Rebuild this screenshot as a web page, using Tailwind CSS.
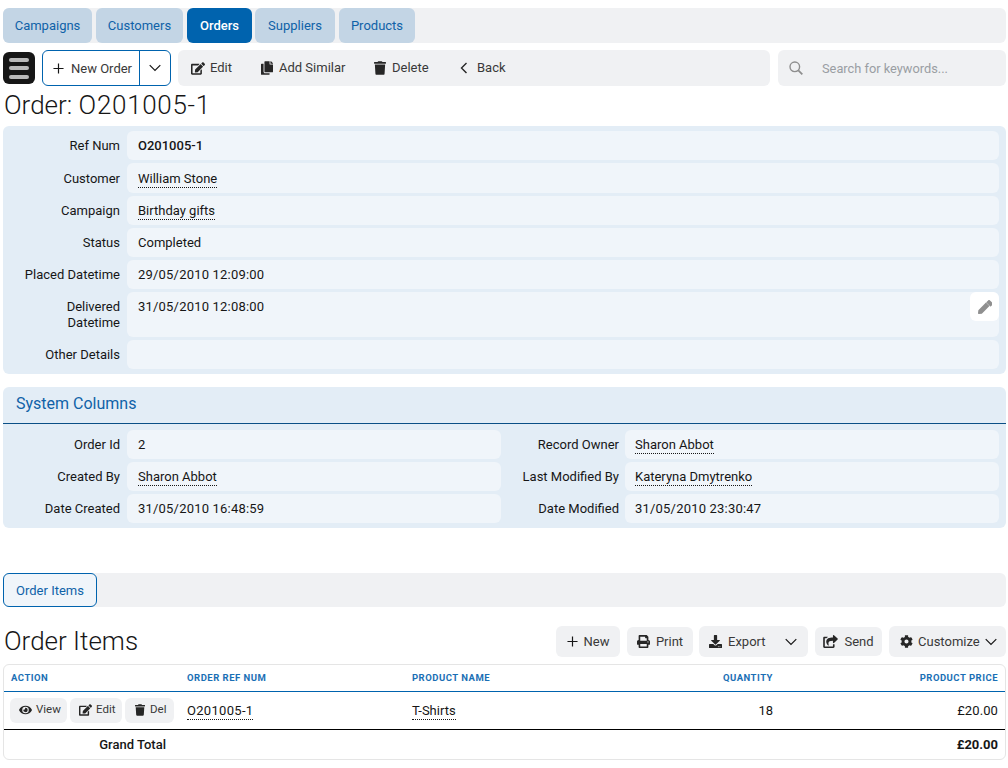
<!doctype html>
<html>
  <head>
    <meta charset="UTF-8" />
    <meta name="viewport" content="width=device-width, initial-scale=1.0" />
    <script src="https://cdn.jsdelivr.net/npm/@tailwindcss/browser@4"></script>
  </head>
  <body class="bg-white font-['Roboto',sans-serif] text-[13px] text-[#161616] h-[768px] overflow-hidden">
    <div class="pl-[3px] pr-[2px] pt-2">
      <!-- main nav -->
      <nav class="flex gap-[3px] h-[35px] bg-[#f0f1f3] rounded-md">
        <a class="w-[89px] flex items-center justify-center rounded-md bg-[#c3d5e5] text-[#0f62a8]">Campaigns</a>
        <a class="w-[87px] ml-px flex items-center justify-center rounded-md bg-[#c3d5e5] text-[#0f62a8]">Customers</a>
        <a class="w-[65px] ml-px flex items-center justify-center rounded-md bg-[#0063ae] text-white font-medium">Orders</a>
        <a class="w-[80px] flex items-center justify-center rounded-md bg-[#c3d5e5] text-[#0f62a8]">Suppliers</a>
        <a class="w-[76px] ml-px flex items-center justify-center rounded-md bg-[#c3d5e5] text-[#0f62a8]">Products</a>
      </nav>

      <!-- toolbar -->
      <div class="flex items-center mt-[7px] h-9">
        <button class="w-8 h-8 bg-[#161616] rounded-md flex flex-col items-center justify-center gap-[4.5px]">
          <span class="w-5 h-[4px] rounded bg-[#b9b9b9]"></span>
          <span class="w-5 h-[4px] rounded bg-[#b9b9b9]"></span>
          <span class="w-5 h-[4px] rounded bg-[#b9b9b9]"></span>
        </button>
        <div class="ml-[7px] w-[129px] h-9 flex border border-[#0063ae] rounded-md bg-white">
          <div class="w-[96px] flex items-center pl-[10px] gap-[7px] text-[#393939]">
            <svg class="w-[11px] h-[11px]" viewBox="0 0 12 12"><path d="M6 .5v11M.5 6h11" stroke="#161616" stroke-width="1.3" fill="none" /></svg>
            <span class="pt-px">New Order</span>
          </div>
          <div class="flex-1 border-l border-[#0063ae] flex items-center justify-center">
            <svg class="w-3 h-2" viewBox="0 0 12 8"><path d="M.7 1.2l5.3 5.3 5.3-5.3" stroke="#161616" stroke-width="1.2" fill="none" /></svg>
          </div>
        </div>
        <div class="ml-[7px] w-[592px] h-9 bg-[#f0f1f3] rounded-md flex items-center text-[#393939]">
          <span class="ml-[13px] flex items-center gap-[5px] w-[70px]">
            <svg class="w-[14px] h-[13px] fill-[#262626]" viewBox="0 0 576 512"><path d="M402.6 83.2l90.2 90.2c3.8 3.8 3.8 10 0 13.8L274.4 405.6l-92.8 10.3c-12.4 1.4-22.9-9.1-21.5-21.5l10.3-92.8L388.8 83.2c3.8-3.8 10-3.8 13.8 0zm162-22.9l-48.8-48.8c-15.2-15.2-39.9-15.2-55.2 0l-35.4 35.4c-3.8 3.8-3.8 10 0 13.8l90.2 90.2c3.8 3.8 10 3.8 13.8 0l35.4-35.4c15.2-15.3 15.2-40 0-55.2zM384 346.2V448H64V128h229.8c3.2 0 6.2-1.3 8.5-3.5l40-40c7.6-7.6 2.2-20.5-8.5-20.5H48C21.5 64 0 85.5 0 112v352c0 26.5 21.5 48 48 48h352c26.5 0 48-21.5 48-48V306.2c0-10.7-12.9-16-20.5-8.5l-40 40c-2.2 2.3-3.5 5.3-3.5 8.5z" /></svg>
            Edit
          </span>
          <span class="flex items-center gap-[6px] w-[113px]">
            <svg class="w-3 h-[14px] fill-[#262626]" viewBox="0 0 448 512"><path d="M320 448v40c0 13.255-10.745 24-24 24H24c-13.255 0-24-10.745-24-24V120c0-13.255 10.745-24 24-24h72v296c0 30.879 25.121 56 56 56h168zm0-344V0H152c-13.255 0-24 10.745-24 24v368c0 13.255 10.745 24 24 24h272c13.255 0 24-10.745 24-24V128H344c-13.2 0-24-10.8-24-24zm120.971-31.029L375.029 7.029A24 24 0 0 0 358.059 0H352v96h96v-6.059a24 24 0 0 0-7.029-16.97z" /></svg>
            Add Similar
          </span>
          <span class="flex items-center gap-[6px] w-[86px]">
            <svg class="w-3 h-[14px] fill-[#262626]" viewBox="0 0 448 512"><path d="M432 32H312l-9.4-18.7A24 24 0 0 0 281.1 0H166.8a23.72 23.72 0 0 0-21.4 13.3L136 32H16A16 16 0 0 0 0 48v32a16 16 0 0 0 16 16h416a16 16 0 0 0 16-16V48a16 16 0 0 0-16-16zM53.2 467a48 48 0 0 0 47.9 45h245.8a48 48 0 0 0 47.9-45L416 128H32z" /></svg>
            Delete
          </span>
          <span class="flex items-center gap-[9px]">
            <svg class="w-[8px] h-3" viewBox="0 0 8 12"><path d="M6.5 1L1.5 6l5 5" stroke="#262626" stroke-width="1.4" fill="none" /></svg>
            Back
          </span>
        </div>
        <div class="ml-2 w-[228px] h-9 bg-[#f0f1f3] rounded-md flex items-center text-[#9a9ea3] text-[12.8px]">
          <svg class="ml-[11px] w-[14px] h-[14px]" viewBox="0 0 14 14"><circle cx="5.8" cy="5.8" r="4.8" stroke="#8e8e8e" stroke-width="1.4" fill="none" /><path d="M9.3 9.3l4 4" stroke="#8e8e8e" stroke-width="1.8" /></svg>
          <span class="ml-[19px] pt-px">Search for keywords...</span>
        </div>
      </div>

      <h1 class="text-[26px] leading-[39px] h-[40px] pl-px font-light">Order: <span class="tracking-[0.7px]">O201005-1</span></h1>

      <!-- order fields -->
      <section class="bg-[#e3edf6] rounded-md pt-[5px] pb-[5px] flex flex-col gap-[3px]">
        <div class="flex h-[29px]"><div class="w-[117px] text-right leading-[29px]">Ref Num</div><div class="ml-[7px] w-[872px] bg-[#f0f5fa] rounded-md pl-[11px] leading-[29px] font-medium">O201005-1</div></div>
        <div class="flex h-[30px]"><div class="w-[117px] text-right leading-[31px]">Customer</div><div class="ml-[7px] w-[872px] bg-[#f0f5fa] rounded-md pl-[11px] leading-[31px]"><span class="border-b border-dotted border-[#161616] pb-px">William Stone</span></div></div>
        <div class="flex h-[29px]"><div class="w-[117px] text-right leading-[29px]">Campaign</div><div class="ml-[7px] w-[872px] bg-[#f0f5fa] rounded-md pl-[11px] leading-[29px]"><span class="border-b border-dotted border-[#161616] pb-px">Birthday gifts</span></div></div>
        <div class="flex h-[29px]"><div class="w-[117px] text-right leading-[29px]">Status</div><div class="ml-[7px] w-[872px] bg-[#f0f5fa] rounded-md pl-[11px] leading-[29px]">Completed</div></div>
        <div class="flex h-[29px]"><div class="w-[117px] text-right leading-[29px]">Placed Datetime</div><div class="ml-[7px] w-[872px] bg-[#f0f5fa] rounded-md pl-[11px] leading-[29px] tracking-[0.2px]">29/05/2010 12:09:00</div></div>
        <div class="flex h-[45px]">
          <div class="w-[117px] text-right leading-4 pt-[7px]">Delivered<br />Datetime</div>
          <div class="ml-[7px] w-[872px] bg-[#f0f5fa] rounded-md pl-[11px] leading-[29px] tracking-[0.2px] relative">
            31/05/2010 12:08:00
            <span class="absolute right-0 top-0 w-[29px] h-[29px] bg-white rounded-md flex items-center justify-center">
              <svg class="w-[14px] h-[14px] fill-[#8f8f8f]" viewBox="0 0 512 512"><path d="M290.74 93.24l128.02 128.02-277.99 277.99-114.14 12.6C11.35 513.54-1.56 500.62.14 485.34l12.7-114.22 277.9-277.88zm207.2-19.06l-60.11-60.11c-18.75-18.75-49.16-18.75-67.91 0l-56.55 56.55c-9.37 9.37-9.37 24.57 0 33.94l128.02 128.02c9.37 9.37 24.57 9.37 33.94 0l56.55-56.55c18.75-18.75 18.75-49.16.06-67.85z" /></svg>
            </span>
          </div>
        </div>
        <div class="flex h-[29px]"><div class="w-[117px] text-right leading-[29px]">Other Details</div><div class="ml-[7px] w-[872px] bg-[#f0f5fa] rounded-md"></div></div>
      </section>

      <!-- system columns -->
      <section class="mt-[13px] bg-[#e3edf6] rounded-md pb-[5px]">
        <h2 class="h-[37px] pl-[13px] leading-[34px] text-[16px] text-[#0f62a8] border-b border-[#0a4f86]">System Columns</h2>
        <div class="grid grid-cols-[498px_498px] gap-y-[3px] pt-[6px]">
          <div class="flex h-[29px]"><div class="w-[117px] text-right leading-[29px]">Order Id</div><div class="ml-[7px] w-[374px] bg-[#f0f5fa] rounded-md pl-[11px] leading-[29px]">2</div></div>
          <div class="flex h-[29px]"><div class="w-[118px] text-right leading-[29px]">Record Owner</div><div class="ml-[6px] w-[374px] bg-[#f0f5fa] rounded-md pl-[10px] leading-[29px]"><span class="border-b border-dotted border-[#161616] pb-px">Sharon Abbot</span></div></div>
          <div class="flex h-[29px]"><div class="w-[117px] text-right leading-[29px]">Created By</div><div class="ml-[7px] w-[374px] bg-[#f0f5fa] rounded-md pl-[11px] leading-[29px]"><span class="border-b border-dotted border-[#161616] pb-px">Sharon Abbot</span></div></div>
          <div class="flex h-[29px]"><div class="w-[118px] text-right leading-[29px]">Last Modified By</div><div class="ml-[6px] w-[374px] bg-[#f0f5fa] rounded-md pl-[10px] leading-[29px]"><span class="border-b border-dotted border-[#161616] pb-px">Kateryna Dmytrenko</span></div></div>
          <div class="flex h-[29px]"><div class="w-[117px] text-right leading-[29px]">Date Created</div><div class="ml-[7px] w-[374px] bg-[#f0f5fa] rounded-md pl-[11px] leading-[29px] tracking-[0.2px]">31/05/2010 16:48:59</div></div>
          <div class="flex h-[29px]"><div class="w-[118px] text-right leading-[29px]">Date Modified</div><div class="ml-[6px] w-[374px] bg-[#f0f5fa] rounded-md pl-[10px] leading-[29px] tracking-[0.2px]">31/05/2010 23:30:47</div></div>
        </div>
      </section>

      <!-- child tabs -->
      <div class="mt-[45px] h-[34px] bg-[#f0f1f3] rounded-md">
        <a class="w-[94px] h-[34px] flex items-center justify-center pt-px bg-[#f0f5fa] border border-[#0063ae] rounded-md text-[#0f62a8]">Order Items</a>
      </div>

      <!-- order items -->
      <div class="mt-[19px] flex items-center h-[31px]">
        <h2 class="text-[26px] leading-[31px] pl-px flex-1 font-light">Order Items</h2>
        <div class="flex items-center text-[#393939]">
          <span class="w-16 h-[31px] bg-[#f0f1f3] rounded-md flex items-center justify-center gap-[6px]">
            <svg class="w-[11px] h-[11px]" viewBox="0 0 12 12"><path d="M6 .5v11M.5 6h11" stroke="#161616" stroke-width="1.3" fill="none" /></svg>New
          </span>
          <span class="ml-[7px] w-[66px] h-[29px] bg-[#f0f1f3] rounded-md flex items-center justify-center gap-[6px]">
            <svg class="w-[13px] h-[13px] fill-[#262626]" viewBox="0 0 512 512"><path d="M448 192V77.25c0-8.49-3.37-16.62-9.37-22.63L393.37 9.37c-6-6-14.14-9.37-22.63-9.37H96C78.33 0 64 14.33 64 32v160c-35.35 0-64 28.65-64 64v112c0 8.84 7.16 16 16 16h48v96c0 17.67 14.33 32 32 32h320c17.67 0 32-14.33 32-32v-96h48c8.84 0 16-7.16 16-16V256c0-35.35-28.65-64-64-64zm-64 256H128v-96h256v96zm0-224H128V64h192v48c0 8.84 7.16 16 16 16h48v96zm48 72c-13.25 0-24-10.75-24-24 0-13.26 10.75-24 24-24s24 10.74 24 24c0 13.25-10.75 24-24 24z" /></svg>Print
          </span>
          <span class="ml-[6px] w-[109px] h-[31px] bg-[#f0f1f3] rounded-md flex items-center pl-[10px]">
            <svg class="w-[13px] h-[13px] fill-[#262626] mr-[6px]" viewBox="0 0 512 512"><path d="M216 0h80c13.3 0 24 10.7 24 24v168h87.7c17.8 0 26.7 21.5 14.1 34.1L269.7 378.3c-7.5 7.5-19.8 7.5-27.3 0L90.1 226.1c-12.6-12.6-3.7-34.1 14.1-34.1H192V24c0-13.3 10.7-24 24-24zm296 376v112c0 13.3-10.7 24-24 24H24c-13.3 0-24-10.7-24-24V376c0-13.3 10.7-24 24-24h146.7l49 49c20.1 20.1 52.5 20.1 72.6 0l49-49H488c13.3 0 24 10.7 24 24zm-124 88c0-11-9-20-20-20s-20 9-20 20 9 20 20 20 20-9 20-20zm64 0c0-11-9-20-20-20s-20 9-20 20 9 20 20 20 20-9 20-20z" /></svg>
            <span class="w-[57px]">Export</span>
            <svg class="w-3 h-2" viewBox="0 0 12 8"><path d="M.7 1.2l5.3 5.3 5.3-5.3" stroke="#161616" stroke-width="1.2" fill="none" /></svg>
          </span>
          <span class="ml-[7px] w-[67px] h-[29px] bg-[#f0f1f3] rounded-md flex items-center justify-center gap-[6px]">
            <svg class="w-[15px] h-[13px] fill-[#262626]" viewBox="0 0 576 512"><path d="M568.482 177.448L424.479 313.433C409.3 327.768 384 317.14 384 295.985v-71.963c-144.575.97-205.566 35.113-164.775 171.353 4.483 14.973-12.846 26.567-25.006 17.33C155.252 383.105 120 326.488 120 269.339c0-143.937 117.599-172.5 264-173.312V24.012c0-21.174 25.317-31.768 40.479-17.448l144.003 135.988c10.02 9.463 10.028 25.425 0 34.896zM384 379.128V448H64V128h50.916a11.99 11.99 0 0 0 8.648-3.693c14.953-15.568 32.237-27.89 51.014-37.676C185.708 80.83 181.584 64 169.033 64H48C21.49 64 0 85.49 0 112v352c0 26.51 21.49 48 48 48h352c26.51 0 48-21.49 48-48v-88.806c0-8.288-8.197-14.066-16.011-11.302a71.83 71.83 0 0 1-34.189 3.377c-7.27-1.046-13.8 4.514-13.8 11.859z" /></svg>Send
          </span>
          <span class="ml-[7px] w-[117px] h-[31px] bg-[#f0f1f3] rounded-md flex items-center pl-[11px]">
            <svg class="w-[13px] h-[13px] fill-[#262626] mr-[5px]" viewBox="0 0 512 512"><path d="M487.4 315.7l-42.6-24.6c4.3-23.2 4.3-47 0-70.2l42.6-24.6c4.9-2.8 7.1-8.6 5.5-14-11.1-35.6-30-67.8-54.7-94.6-3.8-4.1-10-5.1-14.8-2.3L380.8 110c-17.9-15.4-38.5-27.3-60.8-35.1V25.8c0-5.6-3.9-10.5-9.4-11.7-36.7-8.2-74.3-7.8-109.2 0-5.5 1.2-9.4 6.1-9.4 11.7V75c-22.2 7.9-42.8 19.8-60.8 35.1L88.7 85.5c-4.9-2.8-11-1.9-14.8 2.3-24.7 26.7-43.6 58.9-54.7 94.6-1.7 5.4.6 11.2 5.5 14L67.3 221c-4.3 23.2-4.3 47 0 70.2l-42.6 24.6c-4.9 2.8-7.1 8.6-5.5 14 11.1 35.6 30 67.8 54.7 94.6 3.8 4.1 10 5.1 14.8 2.3l42.6-24.6c17.9 15.4 38.5 27.3 60.8 35.1v49.2c0 5.6 3.9 10.5 9.4 11.7 36.7 8.2 74.3 7.8 109.2 0 5.5-1.2 9.4-6.1 9.4-11.7v-49.2c22.2-7.9 42.8-19.8 60.8-35.1l42.6 24.6c4.9 2.8 11 1.9 14.8-2.3 24.7-26.7 43.6-58.9 54.7-94.6 1.5-5.5-.7-11.3-5.6-14.1zM256 336c-44.1 0-80-35.9-80-80s35.9-80 80-80 80 35.9 80 80-35.9 80-80 80z" /></svg>
            <span class="w-[67px]">Customize</span>
            <svg class="w-3 h-2" viewBox="0 0 12 8"><path d="M.7 1.2l5.3 5.3 5.3-5.3" stroke="#161616" stroke-width="1.2" fill="none" /></svg>
          </span>
        </div>
      </div>

      <!-- items table -->
      <div class="mt-[7px] border border-[#e5e5e5] rounded-md h-[96px]">
        <table class="w-full table-fixed border-collapse">
          <colgroup><col class="w-[175px]" /><col class="w-[225px]" /><col /><col class="w-[150px]" /><col class="w-[225px]" /></colgroup>
          <thead>
            <tr class="h-[26px] border-b border-[#0063ae] text-[9.5px] font-bold tracking-[0.5px] text-[#1a6fb5]">
              <th class="text-left pl-[7px]">ACTION</th>
              <th class="text-left pl-2">ORDER REF NUM</th>
              <th class="text-left pl-2">PRODUCT NAME</th>
              <th class="text-right pr-[7px]">QUANTITY</th>
              <th class="text-right pr-[7px]">PRODUCT PRICE</th>
            </tr>
          </thead>
          <tbody>
            <tr class="h-[38px] border-b border-black">
              <td class="pl-[6px]">
                <div class="flex gap-[3px] text-[11.5px] text-[#393939]">
                  <a class="w-[57px] h-[25px] bg-[#f0f1f3] rounded-md flex items-center pl-[9px] gap-[4px]">
                    <svg class="w-[13px] h-[12px] fill-[#262626]" viewBox="0 0 576 512"><path d="M572.52 241.4C518.29 135.59 410.93 64 288 64S57.68 135.64 3.48 241.41a32.35 32.35 0 0 0 0 29.19C57.71 376.41 165.07 448 288 448s230.32-71.64 284.52-177.41a32.35 32.35 0 0 0 0-29.19zM288 400a144 144 0 1 1 144-144 143.93 143.93 0 0 1-144 144zm0-240a95.31 95.31 0 0 0-25.31 3.79 47.85 47.85 0 0 1-66.9 66.9A95.78 95.78 0 1 0 288 160z" /></svg>View
                  </a>
                  <a class="w-[52px] h-[25px] bg-[#f0f1f3] rounded-md flex items-center pl-[9px] gap-[4px]">
                    <svg class="w-[13px] h-[12px] fill-[#262626]" viewBox="0 0 576 512"><path d="M402.6 83.2l90.2 90.2c3.8 3.8 3.8 10 0 13.8L274.4 405.6l-92.8 10.3c-12.4 1.4-22.9-9.1-21.5-21.5l10.3-92.8L388.8 83.2c3.8-3.8 10-3.8 13.8 0zm162-22.9l-48.8-48.8c-15.2-15.2-39.9-15.2-55.2 0l-35.4 35.4c-3.8 3.8-3.8 10 0 13.8l90.2 90.2c3.8 3.8 10 3.8 13.8 0l35.4-35.4c15.2-15.3 15.2-40 0-55.2zM384 346.2V448H64V128h229.8c3.2 0 6.2-1.3 8.5-3.5l40-40c7.6-7.6 2.2-20.5-8.5-20.5H48C21.5 64 0 85.5 0 112v352c0 26.5 21.5 48 48 48h352c26.5 0 48-21.5 48-48V306.2c0-10.7-12.9-16-20.5-8.5l-40 40c-2.2 2.3-3.5 5.3-3.5 8.5z" /></svg>Edit
                  </a>
                  <a class="w-[49px] h-[25px] bg-[#f0f1f3] rounded-md flex items-center pl-[10px] gap-[5px]">
                    <svg class="w-[10px] h-[12px] fill-[#262626]" viewBox="0 0 448 512"><path d="M432 32H312l-9.4-18.7A24 24 0 0 0 281.1 0H166.8a23.72 23.72 0 0 0-21.4 13.3L136 32H16A16 16 0 0 0 0 48v32a16 16 0 0 0 16 16h416a16 16 0 0 0 16-16V48a16 16 0 0 0-16-16zM53.2 467a48 48 0 0 0 47.9 45h245.8a48 48 0 0 0 47.9-45L416 128H32z" /></svg>Del
                  </a>
                </div>
              </td>
              <td class="pl-2 pt-px"><span class="border-b border-dotted border-[#161616] pb-px tracking-[0.3px]">O201005-1</span></td>
              <td class="pl-2 pt-px"><span class="border-b border-dotted border-[#161616] pb-px">T-Shirts</span></td>
              <td class="text-right pr-[7px] pt-px">18</td>
              <td class="text-right pr-[7px] pt-px tracking-[0.1px]">£20.00</td>
            </tr>
            <tr class="h-[29px] font-medium">
              <td class="text-right pr-[13px] pt-[2px]">Grand Total</td>
              <td></td>
              <td></td>
              <td></td>
              <td class="text-right pr-[7px] pt-[2px] font-bold">£20.00</td>
            </tr>
          </tbody>
        </table>
      </div>
    </div>
  </body>
</html>
